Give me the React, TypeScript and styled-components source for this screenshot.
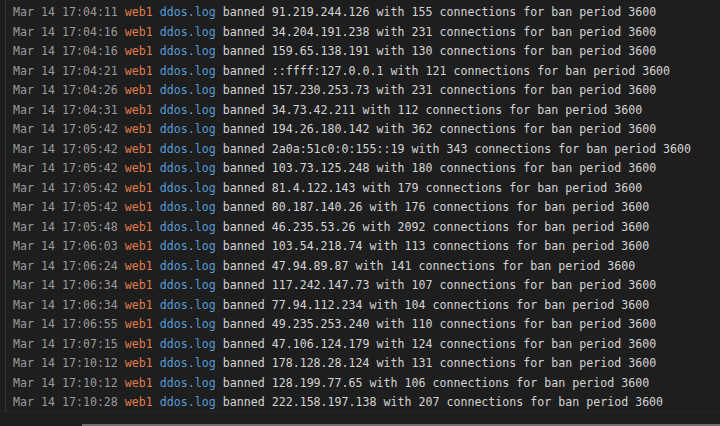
import React from "react";
import styled, { createGlobalStyle } from "styled-components";

const Global = createGlobalStyle`
  html, body { margin: 0; padding: 0; background: #1e1e1e; }
  body { width: 720px; height: 426px; overflow: hidden; }
`;

const Page = styled.div`
  width: 720px;
  height: 426px;
  background: #1e1e1e;
  display: flex;
  flex-direction: column;
`;

const LogArea = styled.div`
  height: 412px;
  display: flex;
  border-bottom: 1px solid #262626;
  box-sizing: border-box;
`;

const Gutter = styled.div`
  width: 5px;
  border-right: 1px solid #333333;
  flex-shrink: 0;
`;

const Lines = styled.div`
  padding: 3px 0 0 7px;
  font-family: "DejaVu Sans Mono", "Liberation Mono", monospace;
  font-size: 11.62px;
  line-height: 19.5px;
  color: #d4d4d4;
  white-space: pre;
`;

const Line = styled.div``;

const Stamp = styled.span`
  color: #9a9a9a;
`;
const Host = styled.span`
  color: #e07c4c;
`;
const File = styled.span`
  color: #569cd6;
`;

const Footer = styled.div`
  flex: 1;
  display: flex;
  align-items: flex-end;
  padding-left: 82px;
`;

const FooterRule = styled.div`
  flex: 1;
  height: 2px;
  background: #6e6e6e;
`;

const rows: [string, string, string][] = [
  ["17:04:11", "91.219.244.126", "155"],
  ["17:04:16", "34.204.191.238", "231"],
  ["17:04:16", "159.65.138.191", "130"],
  ["17:04:21", "::ffff:127.0.0.1", "121"],
  ["17:04:26", "157.230.253.73", "231"],
  ["17:04:31", "34.73.42.211", "112"],
  ["17:05:42", "194.26.180.142", "362"],
  ["17:05:42", "2a0a:51c0:0:155::19", "343"],
  ["17:05:42", "103.73.125.248", "180"],
  ["17:05:42", "81.4.122.143", "179"],
  ["17:05:42", "80.187.140.26", "176"],
  ["17:05:48", "46.235.53.26", "2092"],
  ["17:06:03", "103.54.218.74", "113"],
  ["17:06:24", "47.94.89.87", "141"],
  ["17:06:34", "117.242.147.73", "107"],
  ["17:06:34", "77.94.112.234", "104"],
  ["17:06:55", "49.235.253.240", "110"],
  ["17:07:15", "47.106.124.179", "124"],
  ["17:10:12", "178.128.28.124", "131"],
  ["17:10:12", "128.199.77.65", "106"],
  ["17:10:28", "222.158.197.138", "207"],
];

export default function App() {
  return (
    <Page>
      <Global />
      <LogArea>
        <Gutter />
        <Lines>
          {rows.map(([t, ip, n], i) => (
            <Line key={i}>
              <Stamp>Mar 14 {t}</Stamp> <Host>web1</Host> <File>ddos.log</File>{" "}
              banned {ip} with {n} connections for ban period 3600
            </Line>
          ))}
        </Lines>
      </LogArea>
      <Footer>
        <FooterRule />
      </Footer>
    </Page>
  );
}
